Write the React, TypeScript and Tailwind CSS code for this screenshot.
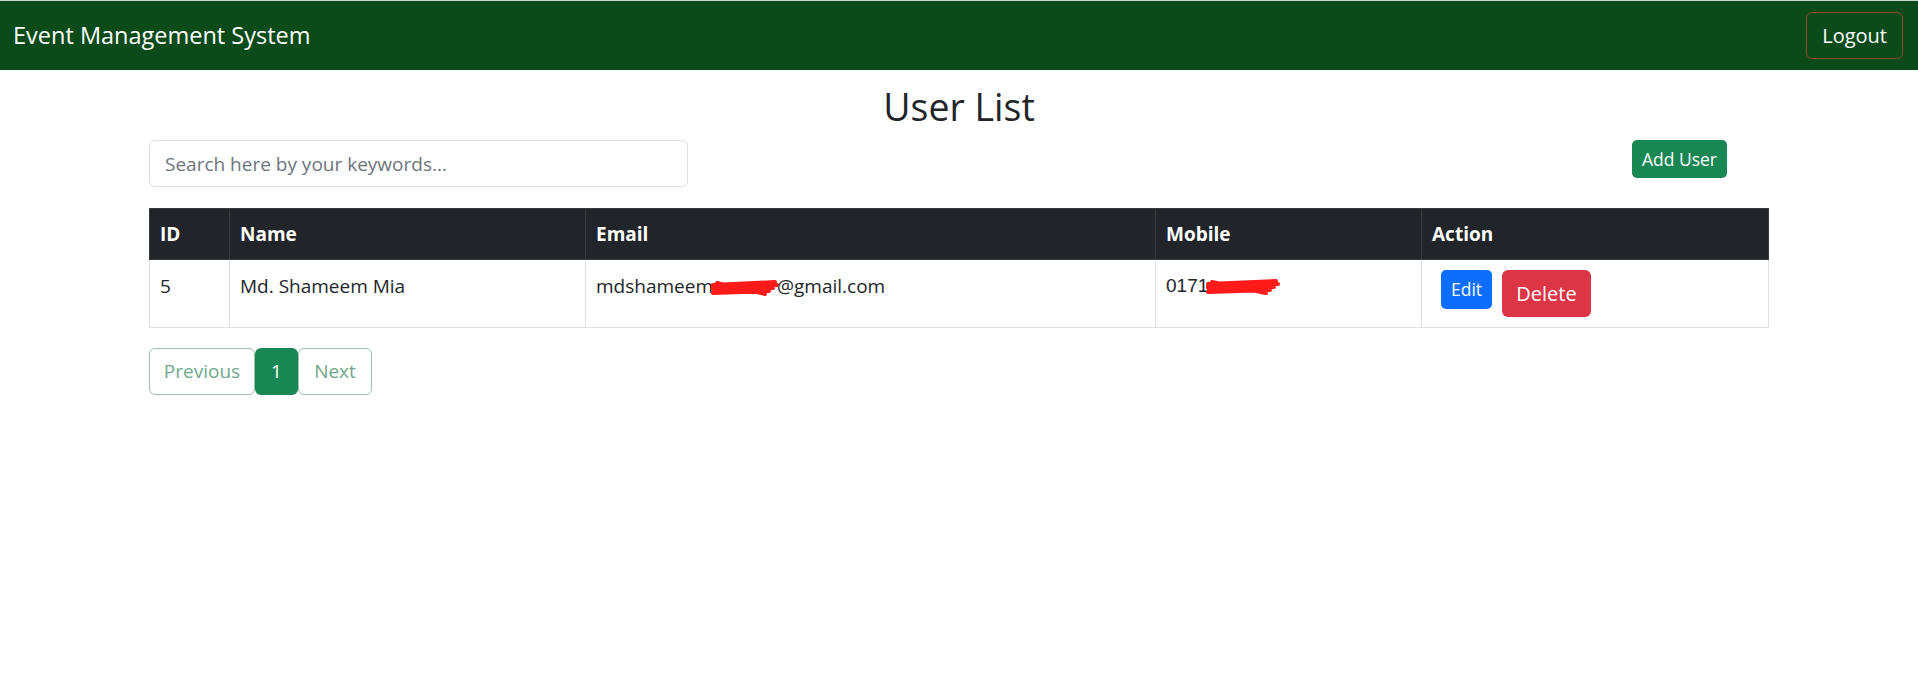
import React from "react";

const users = [
  { id: 5, name: "Md. Shameem Mia", email: "mdshameem", domain: "@gmail.com", mobile: "0171" },
];

// red scribble used to hide private bits in the screenshot
const Scribble = ({ w }: { w: number }) => (
  <svg width={w} height="18" viewBox={`0 0 ${w} 18`} className="inline-block align-middle -mx-[2px]">
    <path
      d={`M2 6 L${w - 4} 3 M1 9 L${w - 2} 6 M3 12 L${w - 6} 9 M2 14 L${w - 10} 12 M6 4 L${w - 14} 15`}
      stroke="#ff1a1a"
      strokeWidth="4"
      strokeLinecap="round"
      fill="none"
    />
  </svg>
);

export default function App() {
  return (
    <div className="min-h-[686px] bg-white text-[#212529] font-['Open_Sans',sans-serif]">
      {/* Navbar */}
      <nav className="h-[70px] bg-[#0b4a19] border-t border-[#c8d8c8] flex items-center justify-between pl-[13px] pr-[15px]">
        <span className="text-white text-[23.5px]">Event Management System</span>
        <button className="h-[47px] px-[15px] rounded-[6px] border border-[#8a4a30] text-white text-[20px]">
          Logout
        </button>
      </nav>

      <div className="w-[1620px] mx-auto">
        <h2 className="text-center text-[37.5px] leading-[48px] mt-[13px]">User List</h2>

        <div className="flex items-start justify-between mt-[9px]">
          <input
            placeholder="Search here by your keywords..."
            className="w-[539px] h-[47px] border border-[#dee2e6] rounded-[6px] px-[15px] text-[19px] placeholder:text-[#6c757d] outline-none"
          />
          <button className="mr-[42px] h-[38px] px-[10px] rounded-[5px] bg-[#198754] text-white text-[17.5px]">
            Add User
          </button>
        </div>

        {/* Table */}
        <table className="w-full mt-[21px] border-collapse text-[19px]">
          <thead>
            <tr className="bg-[#212529] text-white font-bold">
              <th className="w-[80px] text-left font-bold px-[10px] h-[51px] border border-[#373b3e]">ID</th>
              <th className="w-[356px] text-left font-bold px-[10px] border border-[#373b3e]">Name</th>
              <th className="w-[570px] text-left font-bold px-[10px] border border-[#373b3e]">Email</th>
              <th className="w-[266px] text-left font-bold px-[10px] border border-[#373b3e]">Mobile</th>
              <th className="text-left font-bold px-[10px] border border-[#373b3e]">Action</th>
            </tr>
          </thead>
          <tbody>
            {users.map((u) => (
              <tr key={u.id}>
                <td className="align-top px-[10px] pt-[12px] border border-[#dee2e6]">{u.id}</td>
                <td className="align-top px-[10px] pt-[12px] border border-[#dee2e6]">{u.name}</td>
                <td className="align-top px-[10px] pt-[12px] border border-[#dee2e6]">
                  {u.email}
                  <Scribble w={68} />
                  {u.domain}
                </td>
                <td className="align-top px-[10px] pt-[12px] border border-[#dee2e6] font-['Liberation_Sans',sans-serif]">
                  {u.mobile}
                  <Scribble w={74} />
                </td>
                <td className="align-top px-[10px] py-[10px] border border-[#dee2e6]">
                  <div className="flex items-start gap-[10px] ml-[9px]">
                    <button className="h-[39px] w-[51px] rounded-[5px] bg-[#0d6efd] text-white text-[17.5px]">Edit</button>
                    <button className="h-[47px] w-[89px] rounded-[6px] bg-[#dc3545] text-white text-[20px]">Delete</button>
                  </div>
                </td>
              </tr>
            ))}
          </tbody>
        </table>

        {/* Pagination */}
        <div className="flex mt-[20px] text-[19px]">
          <button className="h-[47px] w-[106px] rounded-[6px] border border-[#9cc0ad] text-[#6fa88a]">Previous</button>
          <button className="h-[47px] w-[43px] rounded-[6px] bg-[#198754] text-white">1</button>
          <button className="h-[47px] w-[74px] rounded-[6px] border border-[#9cc0ad] text-[#6fa88a]">Next</button>
        </div>
      </div>
    </div>
  );
}
